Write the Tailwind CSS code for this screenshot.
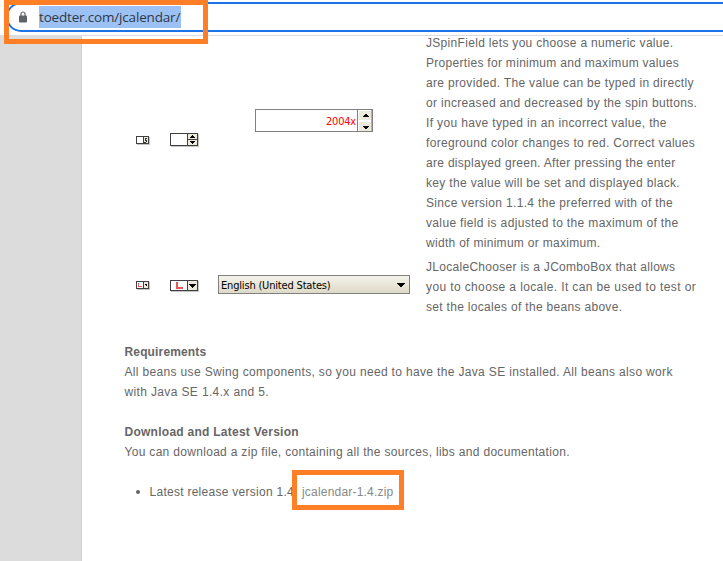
<!DOCTYPE html>
<html lang="en">
<head>
<meta charset="utf-8">
<title>JCalendar</title>
<script src="https://cdn.jsdelivr.net/npm/@tailwindcss/browser@4"></script>
</head>
<body class="relative flex h-[561px] w-[723px] flex-col overflow-hidden bg-white font-['Liberation_Sans',Arial,sans-serif] text-[12px] leading-[20px] tracking-[0.32px] text-[#666]">
<header class="h-[36px] shrink-0 border-b border-[#dadce0] bg-white pt-[2px] pl-[6px]">
  <div class="flex h-[30px] w-[740px] items-center rounded-l-[15px] border-2 border-[#1a73e8] pl-[11px]">
    <svg class="h-[12px] w-[8px] shrink-0" viewBox="0 0 8 12"><path d="M2 5V3a2 2 0 0 1 4 0v2" fill="none" stroke="#5f6368" stroke-width="1.2"/><rect y="4.5" width="8" height="7" rx="1" fill="#5f6368"/></svg>
    <span class="ml-[12px] h-[22px] w-[142px] bg-[#9cc2f5] font-['Open_Sans','Noto_Sans',sans-serif] text-[13.5px] leading-[22px] tracking-[-0.18px] whitespace-nowrap text-[#303843]">toedter.com/jcalendar/</span>
  </div>
</header>
<main class="flex min-h-0 flex-1 overflow-hidden">
  <aside class="w-[82px] shrink-0 border-r border-[#cfcfcf] bg-[#dcdcdc]"></aside>
  <article class="-mt-[3px] flex-1 whitespace-nowrap">
    <section class="grid h-[224px] grid-cols-[54px_82px_208px_1fr]">
      <svg class="mt-[102px] ml-[54px] h-[11px] w-[15px]" viewBox="0 0 15 11" shape-rendering="crispEdges"><path fill="#c4c4c4" d="M1 2h13v8H1z"/><path fill="#404040" d="M0 1h13v8H0z"/><path fill="#fff" d="M1 2h6v6H1z"/><path fill="#eceadb" d="M8 2h4v6H8z"/><path d="M9 3h2v1h-1v1h1v2h-1v1H8V7h2V6H9z" fill="#333"/></svg>
      <svg class="mt-[100px] ml-[34px] h-[14px] w-[29px]" viewBox="0 0 29 14" shape-rendering="crispEdges"><path fill="#c4c4c4" d="M1 1h28v13H1z"/><path fill="#404040" d="M0 0h28v13H0z"/><path fill="#fff" d="M1 1h16v11H1z"/><path fill="#eceadb" d="M18 1h9v5h-9zM18 7h9v5h-9z"/><path d="M22 2h1v1h1v1h1v1h-5V4h1V3h1zM20 8h5v1h-1v1h-1v1h-1v-1h-1V9h-1z"/></svg>
      <div class="mt-[76px] ml-[37px] flex h-[23px] w-[118px] border border-[#808080] bg-white">
        <span class="flex-1 pr-[1px] text-right font-['DejaVu_Sans_Condensed','DejaVu_Sans',sans-serif] text-[11px] leading-[23px] tracking-[-0.2px] text-[#f00]">2004x</span>
        <svg class="h-[21px] w-[15px]" viewBox="0 0 15 21" shape-rendering="crispEdges"><path fill="#808080" d="M0 0h1v21H0z"/><path fill="#eceadb" d="M2 1h12v9H2zM2 12h12v9H2z"/><path fill="#b5b3a7" d="M14 0h1v21h-1z"/><path d="M8 4h2v1h1v1h1v1H6V6h1V5h1zM6 16h6v1h-1v1h-1v1H8v-1H7v-1H6z"/></svg>
      </div>
      <div>
        <p class="tracking-[0.31px]">JSpinField lets you choose a numeric value.</p>
        <p class="tracking-[0.3px]">Properties for minimum and maximum values</p>
        <p class="tracking-[0.33px]">are provided. The value can be typed in directly</p>
        <p>or increased and decreased by the spin buttons.</p>
        <p class="tracking-[0.35px]">If you have typed in an incorrect value, the</p>
        <p>foreground color changes to red. Correct values</p>
        <p class="tracking-[0.3px]">are displayed green. After pressing the enter</p>
        <p class="tracking-[0.33px]">key the value will be set and displayed black.</p>
        <p class="tracking-[0.33px]">Since version 1.1.4 the preferred with of the</p>
        <p class="tracking-[0.35px]">value field is adjusted to the maximum of the</p>
        <p class="tracking-[0.3px]">width of minimum or maximum.</p>
      </div>
    </section>
    <section class="grid h-[85px] grid-cols-[54px_82px_208px_1fr]">
      <svg class="mt-[24px] ml-[54px] h-[10px] w-[15px]" viewBox="0 0 15 10" shape-rendering="crispEdges"><path fill="#c4c4c4" d="M1 1h13v8H1z"/><path fill="#404040" d="M0 0h13v8H0z"/><path fill="#fff" d="M1 1h6v6H1z"/><path fill="#eceadb" d="M8 1h4v6H8z"/><path d="M2 2h1v3h3v1H2z" fill="#e15a58"/><path d="M9 3h2v2h-1V4H9z"/></svg>
      <svg class="mt-[23px] ml-[34px] h-[12px] w-[29px]" viewBox="0 0 29 12" shape-rendering="crispEdges"><path fill="#c4c4c4" d="M1 1h28v11H1z"/><path fill="#404040" d="M0 0h28v11H0z"/><path fill="#fff" d="M1 1h16v9H1z"/><path fill="#eceadb" d="M18 1h9v9h-9z"/><path d="M6 2h2v5h5v2H6z" fill="#e15a58"/><path d="M19 4h7v1h-1v1h-1v1h-1v1h-1V7h-1V6h-1V5h-1z"/></svg>
      <div class="mt-[18px] flex h-[19px] w-[192px] items-center justify-between border border-[#808080] bg-linear-to-b from-[#f4f3ea] to-[#dedac8] pr-[3px] pl-[2px] font-['DejaVu_Sans_Condensed','DejaVu_Sans',sans-serif] text-[11px] leading-[17px] tracking-[-0.18px] text-black">
        <span class="pt-[2px]">English (United States)</span>
        <svg class="mt-[1px] h-[5px] w-[9px]" viewBox="0 0 9 5" shape-rendering="crispEdges"><path d="M0 0h8v1H7v1H6v1H5v1H3V3H2V2H1V1H0z"/></svg>
      </div>
      <div>
        <p class="tracking-[0.29px]">JLocaleChooser is a JComboBox that allows</p>
        <p class="tracking-[0.38px]">you to choose a locale. It can be used to test or</p>
        <p class="tracking-[0.31px]">set the locales of the beans above.</p>
      </div>
    </section>
    <section class="pl-[42.5px]">
      <h2 class="font-bold tracking-[0.15px]">Requirements</h2>
      <p class="tracking-[0.34px]">All beans use Swing components, so you need to have the Java SE installed. All beans also work</p>
      <p class="tracking-[0.36px]">with Java SE 1.4.x and 5.</p>
      <h2 class="mt-[20px] font-bold tracking-[0.26px]">Download and Latest Version</h2>
      <p class="tracking-[0.31px]">You can download a zip file, containing all the sources, libs and documentation.</p>
      <ul class="mt-[20px]">
        <li class="flex items-center"><i class="mr-[10px] ml-[11px] size-[4px] rounded-full bg-[#666]"></i><span class="w-[152.5px] tracking-[0.27px]">Latest release version 1.4:</span><a class="tracking-[0.2px] text-[#888]">jcalendar-1.4.zip</a></li>
      </ul>
    </section>
  </article>
</main>
<div class="absolute top-0 left-[4px] h-[44px] w-[204px] border-[5px] border-[#ff7f27]"></div>
<div class="absolute top-[470px] left-[292px] h-[40px] w-[112px] border-[5px] border-[#ff7f27]"></div>
</body>
</html>
